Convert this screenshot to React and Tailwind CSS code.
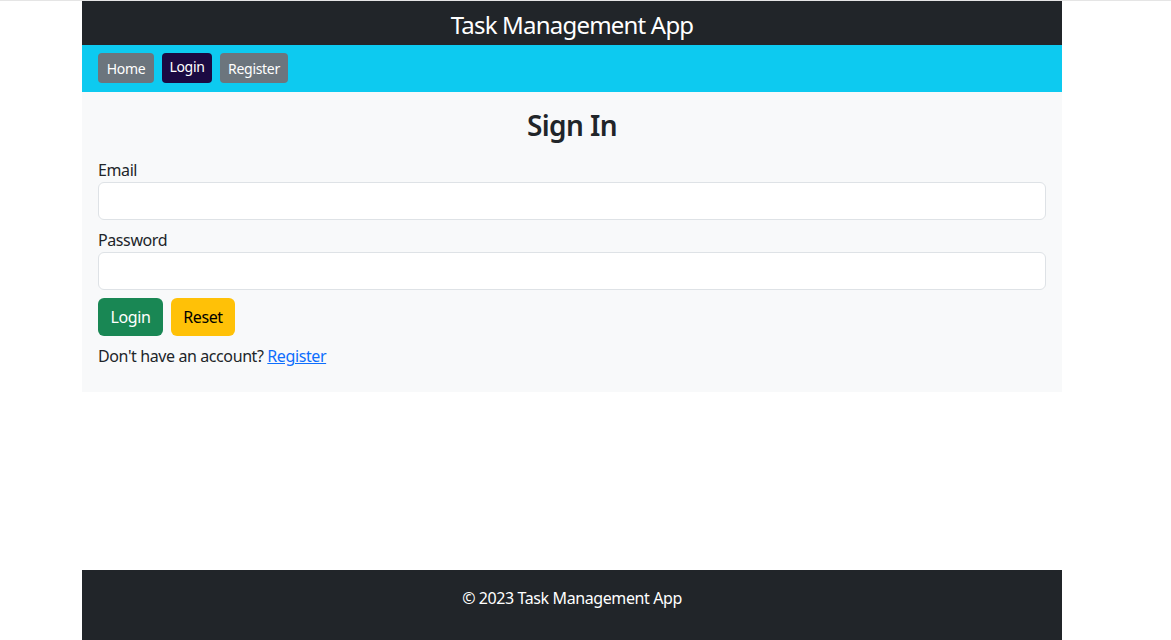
export default function App() {
  return (
    <div
      className="min-h-[640px] bg-white border-t border-[#e5e5e5] tracking-[-0.4px]"
      style={{ fontFamily: '"Noto Sans", "Open Sans", sans-serif' }}
    >
      <div className="w-[980px] ml-[82px] min-h-[639px] flex flex-col">
        {/* Header */}
        <header className="h-[44px] bg-[#212529] flex items-center justify-center pt-[3px]">
          <h1 className="text-[24px] text-white leading-none tracking-[-0.8px]">Task Management App</h1>
        </header>

        {/* Nav */}
        <nav className="h-[47px] bg-[#0dcaf0] flex items-start gap-2 px-4 pt-2 tracking-[-0.3px]">
          <button className="h-[30px] w-[56px] rounded bg-[#6c757d] text-white text-[14px] pt-[1px]">Home</button>
          <button className="h-[30px] w-[50px] rounded bg-[#1b0a42] text-white text-[14px] leading-none pb-[2px]">Login</button>
          <button className="h-[30px] w-[68px] rounded bg-[#6c757d] text-white text-[14px] pt-[1px]">Register</button>
        </nav>

        {/* Sign in form */}
        <main className="bg-[#f8f9fa] px-4 pt-4 pb-[24px] text-[#212529]">
          <h2 className="text-[28px] font-semibold leading-[34px] text-center tracking-[-0.6px]">Sign In</h2>
          <form className="mt-4 flex flex-col" onSubmit={(e) => e.preventDefault()}>
            <label className="text-[16px] leading-6">Email</label>
            <input
              type="email"
              className="h-[38px] bg-white border border-[#dee2e6] rounded-md px-3 outline-none"
            />
            <label className="mt-2 text-[16px] leading-6">Password</label>
            <input
              type="password"
              className="h-[38px] bg-white border border-[#dee2e6] rounded-md px-3 outline-none"
            />
            <div className="mt-2 flex gap-2">
              <button type="submit" className="h-[38px] w-[65px] rounded-md bg-[#198754] text-white text-[16px]">Login</button>
              <button type="reset" className="h-[38px] w-[64px] rounded-md bg-[#ffc107] text-black text-[16px]">Reset</button>
            </div>
          </form>
          <p className="mt-2 text-[16px] leading-6">
            Don't have an account?{" "}
            <a href="#" className="text-[#0d6efd] underline">Register</a>
          </p>
        </main>

        <div className="flex-1" />

        {/* Footer */}
        <footer className="h-[70px] bg-[#212529] pt-4 text-center text-white text-[16px] leading-6">
          © 2023 Task Management App
        </footer>
      </div>
    </div>
  );
}
